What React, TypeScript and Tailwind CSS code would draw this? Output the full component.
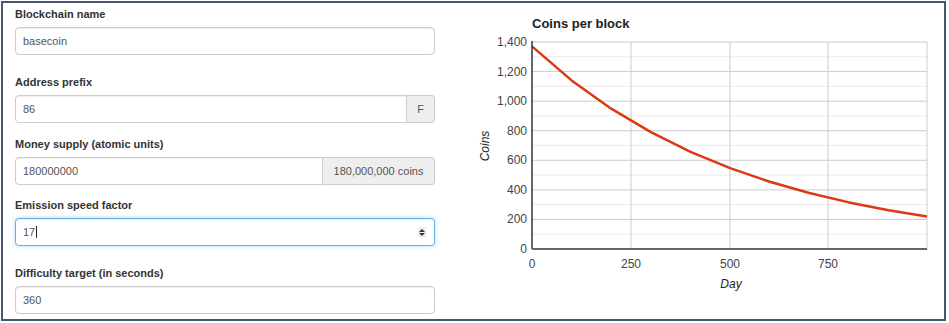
const fields = [
  { label: "Blockchain name", value: "basecoin", gap: "mb-[20px]" },
  { label: "Address prefix", value: "86", addon: "F", gap: "mb-[14px]" },
  { label: "Money supply (atomic units)", value: "180000000", addon: "180,000,000 coins", gap: "mb-[13px]" },
  { label: "Emission speed factor", value: "17", focused: true, gap: "mb-[20px]" },
  { label: "Difficulty target (in seconds)", value: "360", gap: "" },
];

type Field = (typeof fields)[number] & { addon?: string; focused?: boolean };

const FormField = ({ field }: { field: Field }) => {
  return (
    <div className={field.gap}>
      <div className="h-[15px] leading-[15px] mb-[5px] text-[11px] font-bold text-[#333]">{field.label}</div>
      <div className="flex h-[28px]">
        <div
          className={`flex-1 flex items-center px-[7px] text-[11px] text-[#555] bg-white border ${
            field.addon ? "rounded-l-[4px]" : "rounded-[4px]"
          } ${
            field.focused
              ? "border-[#66afe9] shadow-[inset_0_1px_1px_rgba(0,0,0,0.075),0_0_4px_rgba(102,175,233,0.5)]"
              : "border-[#ccc] shadow-[inset_0_1px_1px_rgba(0,0,0,0.075)]"
          }`}
        >
          <span>{field.value}</span>
          {field.focused && <span className="w-px h-[12px] bg-[#222] ml-px" />}
          {field.focused && (
            <div className="ml-auto mr-[1px] w-[8px] h-[10px] bg-[#eee] flex flex-col items-center justify-center gap-[1px]">
              <svg width="6" height="3" viewBox="0 0 6 3"><path d="M0 3 L3 0 L6 3 Z" fill="#333" /></svg>
              <svg width="6" height="3" viewBox="0 0 6 3"><path d="M0 0 L3 3 L6 0 Z" fill="#333" /></svg>
            </div>
          )}
        </div>
        {field.addon && (
          <div
            className={`flex items-center justify-center bg-[#eee] border border-l-0 border-[#ccc] rounded-r-[4px] text-[11px] text-[#555] ${
              field.addon === "F" ? "w-[28px]" : "w-[112px]"
            }`}
          >
            {field.addon}
          </div>
        )}
      </div>
    </div>
  );
};

// chart geometry, in page coordinates
const X0 = 532;
const X1 = 927;
const Y0 = 249;
const Y1 = 42;
const xOf = (d: number) => X0 + (d / 997) * (X1 - X0);
const yOf = (v: number) => Y0 - (v / 1400) * (Y0 - Y1);

const CoinsChart = () => {
  const days: number[] = [];
  for (let d = 0; d < 997; d += 100) days.push(d);
  days.push(997);
  const points = days.map((d) => `${xOf(d).toFixed(1)},${yOf(1370 * Math.exp(-0.001836 * d)).toFixed(1)}`).join(" ");

  const minors = [100, 300, 500, 700, 900, 1100, 1300];
  const majors = [200, 400, 600, 800, 1000, 1200, 1400];
  const xTicks = [0, 250, 500, 750];

  return (
    <svg width="498" height="315" viewBox="445 3 498 315" className="font-['Liberation_Sans',Arial,sans-serif]">
      <text x={X0} y={28} fontSize="13" fontWeight="bold" fill="#222">Coins per block</text>

      {minors.map((v) => (
        <line key={v} x1={X0} x2={X1} y1={yOf(v)} y2={yOf(v)} stroke="#ebebeb" strokeWidth="1" />
      ))}
      {majors.map((v) => (
        <line key={v} x1={X0} x2={X1} y1={yOf(v)} y2={yOf(v)} stroke="#ccc" strokeWidth="1" />
      ))}
      {[631, 730, 828, X1].map((x) => (
        <line key={x} x1={x} x2={x} y1={Y1} y2={Y0} stroke="#ccc" strokeWidth="1" />
      ))}

      <polyline points={points} fill="none" stroke="#dc3912" strokeWidth="2.5" strokeLinejoin="round" />

      <line x1={X0} x2={X0} y1={Y1 - 1} y2={Y0} stroke="#333" strokeWidth="1.5" />
      <line x1={X0} x2={X1} y1={Y0} y2={Y0} stroke="#666" strokeWidth="2" />

      {[0, ...majors].map((v) => (
        <text key={v} x={527} y={yOf(v) + 4} fontSize="12" fill="#444" textAnchor="end">
          {v.toLocaleString("en-US")}
        </text>
      ))}
      {xTicks.map((d, i) => (
        <text key={d} x={[532, 631, 730, 828][i]} y={268} fontSize="12" fill="#444" textAnchor="middle">
          {d}
        </text>
      ))}

      <text x={731} y={288} fontSize="12" fontStyle="italic" fill="#222" textAnchor="middle">Day</text>
      <text x={489} y={146} fontSize="12" fontStyle="italic" fill="#222" textAnchor="middle" transform="rotate(-90 489 146)">
        Coins
      </text>
    </svg>
  );
};

const App = () => {
  return (
    <div className="w-[949px] h-[323px] bg-white pt-px pl-px font-['Liberation_Sans',Arial,sans-serif]">
      <div className="w-[945px] h-[320px] border-2 border-[#485674] flex items-start">
        <div className="w-[420px] ml-[12px] pt-1">
          {fields.map((f) => (
            <FormField key={f.label} field={f as Field} />
          ))}
        </div>
        <div className="ml-[10px]">
          <CoinsChart />
        </div>
      </div>
    </div>
  );
};

export default App;
